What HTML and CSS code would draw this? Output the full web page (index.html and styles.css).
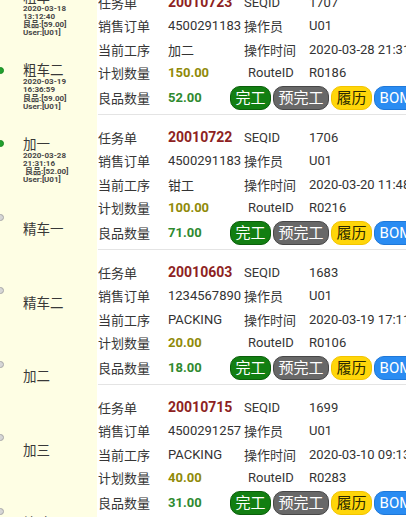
FILE: index.html
```html
<!DOCTYPE html>
<html lang="zh-CN">
<head>
<meta charset="utf-8">
<title>工序</title>
<link rel="stylesheet" href="styles.css">
</head>
<body>
<div class="page">
  <aside class="timeline">
    <div class="step done">
      <span class="dot"></span>
      <div class="step-body">
        <div class="step-name">粗车一</div>
        <div class="step-info">2020-03-18</div>
        <div class="step-info">13:12:40</div>
        <div class="step-info">良品:[59.00]</div>
        <div class="step-info">User:[U01]</div>
      </div>
    </div>
    <div class="step done">
      <span class="dot"></span>
      <div class="step-body">
        <div class="step-name">粗车二</div>
        <div class="step-info">2020-03-19</div>
        <div class="step-info">16:36:59</div>
        <div class="step-info">良品:[59.00]</div>
        <div class="step-info">User:[U01]</div>
      </div>
    </div>
    <div class="step done">
      <span class="dot"></span>
      <div class="step-body">
        <div class="step-name">加一</div>
        <div class="step-info">2020-03-28</div>
        <div class="step-info">21:31:16</div>
        <div class="step-info">&nbsp;良品:[52.00]</div>
        <div class="step-info">User:[U01]</div>
      </div>
    </div>
    <div class="step todo">
      <span class="dot"></span>
      <div class="step-body"><div class="step-name">精车一</div></div>
    </div>
    <div class="step todo">
      <span class="dot"></span>
      <div class="step-body"><div class="step-name">精车二</div></div>
    </div>
    <div class="step todo">
      <span class="dot"></span>
      <div class="step-body"><div class="step-name">加二</div></div>
    </div>
    <div class="step todo">
      <span class="dot"></span>
      <div class="step-body"><div class="step-name">加三</div></div>
    </div>
    <div class="step todo">
      <span class="dot"></span>
      <div class="step-body"><div class="step-name">检验</div></div>
    </div>
  </aside>

  <main class="orders">
    <section class="card">
      <div class="lbl">任务单</div><div class="val task">20010723</div><div class="lbl2">SEQID</div><div class="val">1707</div>
      <div class="lbl">销售订单</div><div class="val">4500291183</div><div class="lbl2">操作员</div><div class="val">U01</div>
      <div class="lbl">当前工序</div><div class="val">加二</div><div class="lbl2">操作时间</div><div class="val">2020-03-28 21:31:16</div>
      <div class="lbl">计划数量</div><div class="val plan">150.00</div><div class="lbl2 route">RouteID</div><div class="val">R0186</div>
      <div class="lbl">良品数量</div>
      <div class="actions"><span class="val good">52.00</span><button class="btn b-done">完工</button><button class="btn b-pre">预完工</button><button class="btn b-hist">履历</button><button class="btn b-bom">BOM</button></div>
    </section>
    <section class="card">
      <div class="lbl">任务单</div><div class="val task">20010722</div><div class="lbl2">SEQID</div><div class="val">1706</div>
      <div class="lbl">销售订单</div><div class="val">4500291183</div><div class="lbl2">操作员</div><div class="val">U01</div>
      <div class="lbl">当前工序</div><div class="val">钳工</div><div class="lbl2">操作时间</div><div class="val">2020-03-20 11:48:05</div>
      <div class="lbl">计划数量</div><div class="val plan">100.00</div><div class="lbl2 route">RouteID</div><div class="val">R0216</div>
      <div class="lbl">良品数量</div>
      <div class="actions"><span class="val good">71.00</span><button class="btn b-done">完工</button><button class="btn b-pre">预完工</button><button class="btn b-hist">履历</button><button class="btn b-bom">BOM</button></div>
    </section>
    <section class="card">
      <div class="lbl">任务单</div><div class="val task">20010603</div><div class="lbl2">SEQID</div><div class="val">1683</div>
      <div class="lbl">销售订单</div><div class="val">1234567890</div><div class="lbl2">操作员</div><div class="val">U01</div>
      <div class="lbl">当前工序</div><div class="val">PACKING</div><div class="lbl2">操作时间</div><div class="val">2020-03-19 17:11:42</div>
      <div class="lbl">计划数量</div><div class="val plan">20.00</div><div class="lbl2 route">RouteID</div><div class="val">R0106</div>
      <div class="lbl">良品数量</div>
      <div class="actions"><span class="val good">18.00</span><button class="btn b-done">完工</button><button class="btn b-pre">预完工</button><button class="btn b-hist">履历</button><button class="btn b-bom">BOM</button></div>
    </section>
    <section class="card">
      <div class="lbl">任务单</div><div class="val task">20010715</div><div class="lbl2">SEQID</div><div class="val">1699</div>
      <div class="lbl">销售订单</div><div class="val">4500291257</div><div class="lbl2">操作员</div><div class="val">U01</div>
      <div class="lbl">当前工序</div><div class="val">PACKING</div><div class="lbl2">操作时间</div><div class="val">2020-03-10 09:13:27</div>
      <div class="lbl">计划数量</div><div class="val plan">40.00</div><div class="lbl2 route">RouteID</div><div class="val">R0283</div>
      <div class="lbl">良品数量</div>
      <div class="actions"><span class="val good">31.00</span><button class="btn b-done">完工</button><button class="btn b-pre">预完工</button><button class="btn b-hist">履历</button><button class="btn b-bom">BOM</button></div>
    </section>
  </main>
</div>
</body>
</html>
```

FILE: styles.css
```css
html, body {
  margin: 0;
  padding: 0;
  width: 406px;
  height: 517px;
  overflow: hidden;
  background: #ffffff;
  font-family: Roboto, "Noto Sans CJK SC", sans-serif;
  color: #333333;
}

.page {
  display: flex;
  align-items: flex-start;
  width: 406px;
  height: 517px;
  overflow: hidden;
}

/* ---------- left timeline ---------- */
.timeline {
  flex: 0 0 97px;
  width: 97px;
  height: 560px;
  margin-top: -11.5px;
  background: #fefee4;
  overflow: hidden;
}

.step {
  height: 73.5px;
  display: flex;
  align-items: flex-start;
}

.dot {
  flex: 0 0 auto;
  width: 7px;
  height: 7px;
  margin-left: -3.5px;
  margin-top: 4.5px;
  border-radius: 50%;
  box-sizing: border-box;
}

.done .dot {
  background: #22a02e;
  border: 1px solid #178a22;
}

.todo .dot {
  background: #d6d6d6;
  border: 1px solid #a8a8a8;
}

.step-body {
  margin-left: 19.5px;
}

.todo .step-body {
  padding-top: 12px;
}

.step-name {
  font-size: 13.5px;
  line-height: 16px;
  height: 16px;
  color: #383838;
  white-space: nowrap;
}

.step-info {
  font-size: 8px;
  line-height: 8.3px;
  font-weight: bold;
  color: #474747;
  white-space: nowrap;
}

/* ---------- right orders ---------- */
.orders {
  flex: 0 0 auto;
  width: 360px;
  margin-top: -20.5px;
  padding-left: 1px;
}

.card {
  display: grid;
  grid-template-columns: 70px 76px 65px auto;
  grid-template-rows: 23.5px 23.5px 23.5px 23.5px 26px;
  align-items: center;
  padding: 11px 0 3px 0;
  border-bottom: 1px solid #e4e4e4;
  white-space: nowrap;
  font-size: 13px;
}

.lbl {
  font-size: 13px;
  color: #363636;
}

.lbl2 {
  font-size: 13px;
  color: #363636;
}

.lbl2.route {
  padding-left: 4px;
}

.val {
  font-size: 13px;
  color: #333333;
}

.val.task {
  font-size: 14px;
  font-weight: bold;
  color: #8e1f22;
}

.val.plan {
  font-weight: bold;
  color: #8f8a08;
}

.val.good {
  font-weight: bold;
  color: #2f8a2f;
  width: 60px;
  flex: 0 0 60px;
}

.actions {
  grid-column: 2 / 5;
  display: flex;
  align-items: center;
  gap: 2px;
  height: 26px;
}

.btn {
  flex: 0 0 auto;
  height: 24px;
  box-sizing: border-box;
  padding: 0 4.5px;
  margin: 0;
  border-radius: 10px;
  border: 1.5px solid transparent;
  font-family: Roboto, "Noto Sans CJK SC", sans-serif;
  font-size: 15px;
  line-height: 20px;
  color: #ffffff;
  white-space: nowrap;
}

.b-done {
  background: #127f12;
  border-color: #0b5f0b;
}

.b-pre {
  background: #686868;
  border-color: #474747;
}

.b-hist {
  background: #ffd60a;
  border-color: #f2c400;
  color: #2a2a00;
}

.b-bom {
  background: #2a8cf2;
  border-color: #1f78d8;
  padding-right: 12px;
}
```
